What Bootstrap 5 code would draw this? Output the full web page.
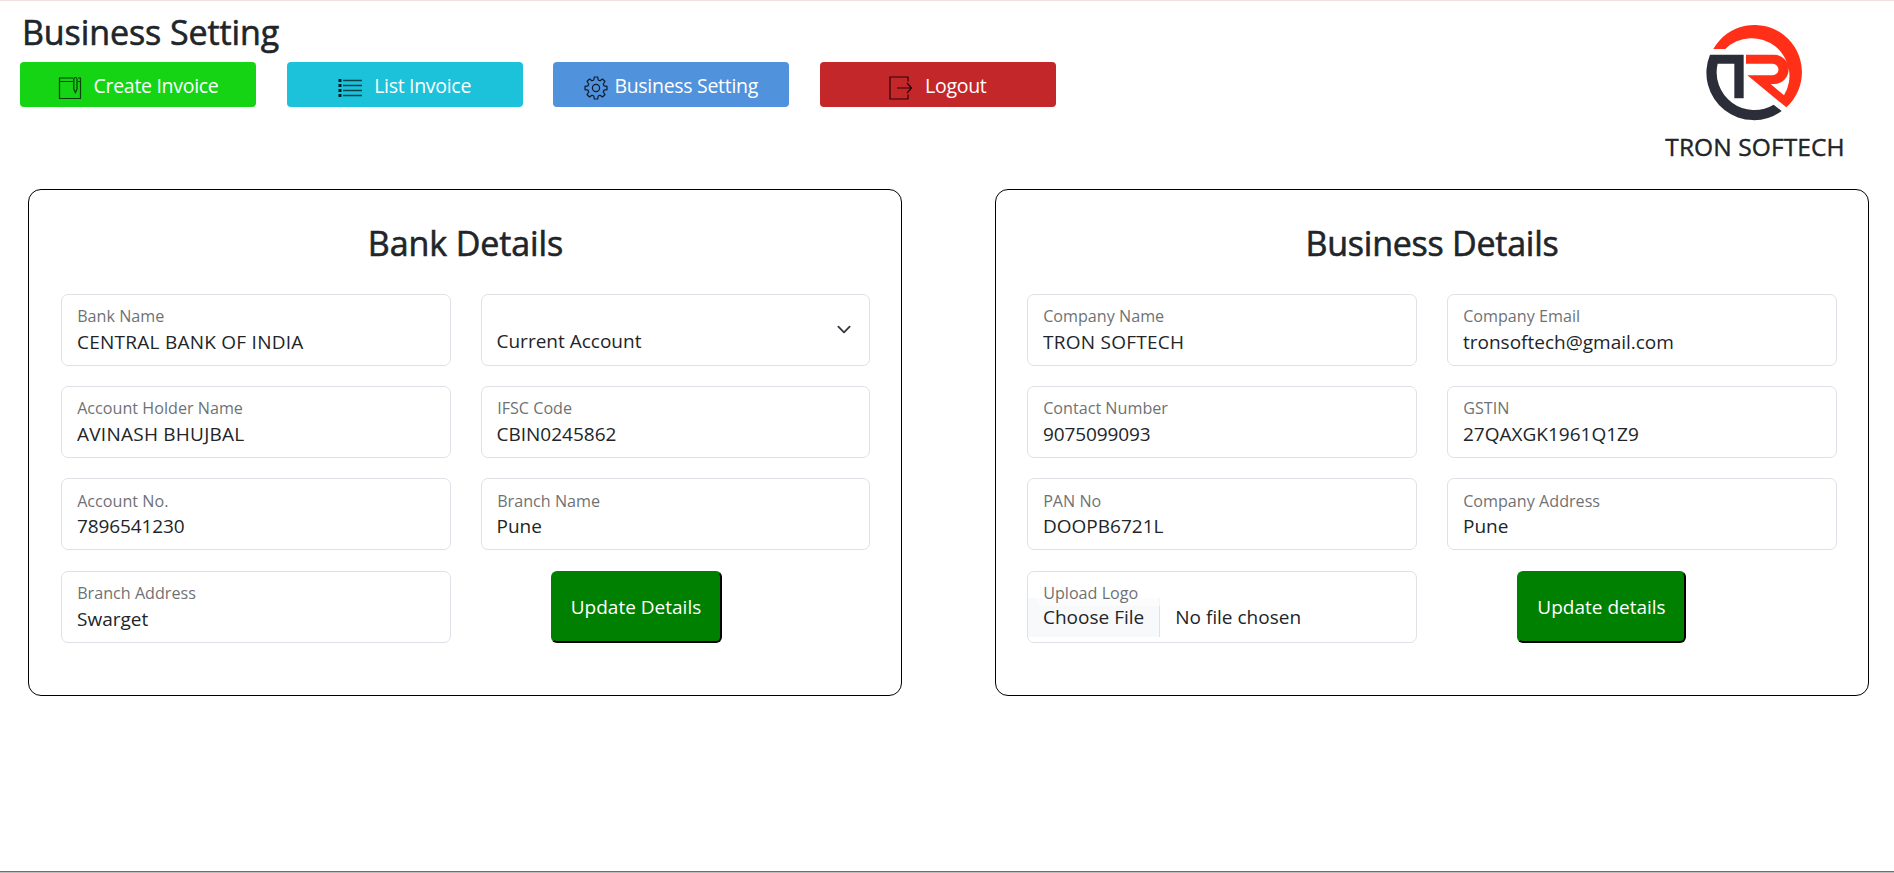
<!DOCTYPE html>
<html lang="en">
<head>
<meta charset="utf-8">
<title>Business Setting</title>
<link href="https://cdn.jsdelivr.net/npm/bootstrap@5.3.0/dist/css/bootstrap.min.css" rel="stylesheet">
<script src="https://cdn.jsdelivr.net/npm/bootstrap@5.3.0/dist/js/bootstrap.bundle.min.js" defer></script>
<style>
html{font-size:20px}
body{font-family:"Open Sans","Noto Sans",sans-serif;font-size:19px;height:873px;overflow:hidden;border-top:1px solid #f3dfdf;border-bottom:1px solid #bdbdbd;box-shadow:inset 0 -1px #6f6f6f;color:#212529}
.page-head{height:188px;padding:0 20px}
.page-title,.panel h2{font-size:34px;line-height:42px;font-weight:500;-webkit-text-stroke:.6px #212529}
.page-title{padding:10px 0 0 2px;margin:0 0 9px;letter-spacing:-.1px}
.menu{gap:30.6px}
.menu .btn{width:236px;height:45px;padding:2px 0 0;border:0;border-radius:4px;color:#fff;font-size:19.5px;letter-spacing:-.3px;line-height:42px;gap:12px}
.menu .btn svg{width:24px;height:24px;margin-top:4px;flex:none}
.b-create{background:#14d414}.b-list{background:#1cc1da}.b-set{background:#5092db}.b-out{background:#c42729}
.menu .b-set{gap:6px}
.brand{width:200px;margin-right:19px;padding-top:19px}
.brand svg{width:110px;height:105px;display:block;margin:0 auto}
.brand-name{font-size:24.5px;line-height:30px;margin-top:7px;white-space:nowrap;letter-spacing:.1px;-webkit-text-stroke:.4px #212529}
.panels{padding:0 25px 0 28px;gap:93px}
.panel{flex:0 0 calc(50% - 46.5px);height:507px;border:1px solid #000;border-radius:13px;padding:32px 31px 0 32px}
.panel + .panel{padding:32px 31px 0}
.panel h2{margin:0 0 29.5px;letter-spacing:-.1px}
.panel + .panel h2{letter-spacing:-.25px}
.fields{display:grid;grid-template-columns:1fr 1fr;column-gap:30px;row-gap:20.4px}
.fields .form-floating > .form-control,.fields .form-floating > .form-select{font-size:19px;border-color:#dee2e6;border-radius:7px;height:72px;min-height:72px;color:#212529;padding-top:34px;padding-bottom:10px}
.fields .form-floating > .form-select{background-size:20px 15px;padding-top:35px}
.fields label{font-size:19px;top:1.5px}
.fields .caps{letter-spacing:.25px}
.fields .digits{letter-spacing:-.1px}
.upload label::after{content:"";position:absolute;z-index:-1;inset:20px 7.5px auto;height:29px;background:#fff;border-radius:7px}
.btn-update{width:171px;height:72px;margin-left:70px;background:green;color:#fff;border:2px outset #000;border-color:green #052b05 #052b05 green;border-radius:6px;font-size:19px;padding-top:3px}
.panel + .panel .btn-update{width:169px}
</style>
</head>
<body>
<header class="page-head d-flex justify-content-between">
  <div>
    <h1 class="page-title">Business Setting</h1>
    <nav class="menu d-flex">
      <a class="btn b-create d-flex align-items-center justify-content-center"><svg viewBox="0 0 24 24" fill="none" stroke="#063d06" stroke-width="1.2"><path d="M15 2H1.5V22.5H22.5V2H20M1.5 5.5H15M20 5.5H22.5"/><path d="M15.8 3.5Q15.8 1.5 17.4 1.5T19 3.5V13L17.4 16.5 15.8 13Z"/></svg><span>Create Invoice</span></a>
      <a class="btn b-list d-flex align-items-center justify-content-center"><svg viewBox="0 0 24 24" fill="none" stroke="#06434c" stroke-width="1.3"><path d="M5 4.5H24M5 9.5H24M5 14.5H24M5 19.5H24"/><path stroke-width="3.2" stroke="#021d22" d="M.5 4.5H3.5M.5 9.5H3.5M.5 14.5H3.5M.5 19.5H3.5"/></svg><span>List Invoice</span></a>
      <a class="btn b-set d-flex align-items-center justify-content-center"><svg viewBox="0 0 24 24" fill="none" stroke="#0d1b2b" stroke-width="1.2"><circle cx="12" cy="12" r="3.6"/><path d="M10.3 1H13.7L14.2 4 16 4.8 18.5 3 21 5.5 19.2 8 20 9.8 23 10.3V13.7L20 14.2 19.2 16 21 18.5 18.5 21 16 19.2 14.2 20 13.7 23H10.3L9.8 20 8 19.2 5.5 21 3 18.5 4.8 16 4 14.2 1 13.7V10.3L4 9.8 4.8 8 3 5.5 5.5 3 8 4.8 9.8 4Z" stroke-linejoin="round"/></svg><span>Business Setting</span></a>
      <a class="btn b-out d-flex align-items-center justify-content-center"><svg viewBox="0 0 24 24" fill="none" stroke="#260506" stroke-width="1.2"><path d="M19 5.5V1H1V23H19V18.5M8 12H22.5M18 7L22.5 12 18 17"/></svg><span>Logout</span></a>
    </nav>
  </div>
  <div class="brand text-center">
    <svg viewBox="0 0 330 315"><path fill="#ff2f18" d="M40 87A142 142 0 1 1 259 262L142 166H218A17.5 17.5 0 0 0 218 131H138V104H222A44 44 0 0 1 222 192H212L252 226A113 113 0 0 0 76 87Z"/><path fill="#2b2e38" d="M30 104H131V235H103V131H53A113 113 0 0 0 221 254L245 273A142 142 0 0 1 30 104Z"/></svg>
    <div class="brand-name">TRON SOFTECH</div>
  </div>
</header>
<main class="panels d-flex">
  <section class="panel">
    <h2 class="text-center">Bank Details</h2>
    <form class="fields">
      <div class="form-floating"><input class="form-control caps" id="bankName" placeholder=" " value="CENTRAL BANK OF INDIA"><label for="bankName">Bank Name</label></div>
      <div class="form-floating"><select class="form-select"><option>Current Account</option></select></div>
      <div class="form-floating"><input class="form-control caps" id="holder" placeholder=" " value="AVINASH BHUJBAL"><label for="holder">Account Holder Name</label></div>
      <div class="form-floating"><input class="form-control" id="ifsc" placeholder=" " value="CBIN0245862"><label for="ifsc">IFSC Code</label></div>
      <div class="form-floating"><input class="form-control digits" id="accountNo" placeholder=" " value="7896541230"><label for="accountNo">Account No.</label></div>
      <div class="form-floating"><input class="form-control" id="branch" placeholder=" " value="Pune"><label for="branch">Branch Name</label></div>
      <div class="form-floating"><input class="form-control" id="branchAddress" placeholder=" " value="Swarget"><label for="branchAddress">Branch Address</label></div>
      <div><button type="button" class="btn-update">Update Details</button></div>
    </form>
  </section>
  <section class="panel">
    <h2 class="text-center">Business Details</h2>
    <form class="fields">
      <div class="form-floating"><input class="form-control caps" id="company" placeholder=" " value="TRON SOFTECH"><label for="company">Company Name</label></div>
      <div class="form-floating"><input class="form-control" id="email" placeholder=" " value="tronsoftech@gmail.com"><label for="email">Company Email</label></div>
      <div class="form-floating"><input class="form-control digits" id="contact" placeholder=" " value="9075099093"><label for="contact">Contact Number</label></div>
      <div class="form-floating"><input class="form-control" id="gstin" placeholder=" " value="27QAXGK1961Q1Z9"><label for="gstin">GSTIN</label></div>
      <div class="form-floating"><input class="form-control" id="pan" placeholder=" " value="DOOPB6721L"><label for="pan">PAN No</label></div>
      <div class="form-floating"><input class="form-control" id="address" placeholder=" " value="Pune"><label for="address">Company Address</label></div>
      <div class="form-floating upload"><input class="form-control" id="logo" type="file" placeholder=" "><label for="logo">Upload Logo</label></div>
      <div><button type="button" class="btn-update">Update details</button></div>
    </form>
  </section>
</main>
</body>
</html>
